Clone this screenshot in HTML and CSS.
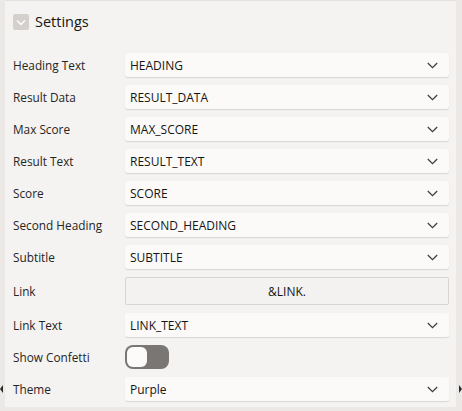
FILE: index.html
```html
<!DOCTYPE html>
<html>
<head>
<meta charset="utf-8">
<link rel="stylesheet" href="styles.css">
</head>
<body>
<div class="panel">
  <div class="header">
    <span class="collapse">
      <svg width="16" height="16" viewBox="0 0 16 16"><path d="M4 6.5 L8 10.5 L12 6.5" fill="none" stroke="#fff" stroke-width="1.4"/></svg>
    </span>
    <span class="title">Settings</span>
  </div>
  <div class="rows">
    <div class="row"><label class="lbl">Heading Text</label><div class="select"><span>HEADING</span><svg class="chev" width="11" height="7" viewBox="0 0 11 7"><path d="M0.8 1 L5.5 5.7 L10.2 1" fill="none" stroke="#3b3a38" stroke-width="1.2"/></svg></div></div>
    <div class="row"><label class="lbl">Result Data</label><div class="select"><span>RESULT_DATA</span><svg class="chev" width="11" height="7" viewBox="0 0 11 7"><path d="M0.8 1 L5.5 5.7 L10.2 1" fill="none" stroke="#3b3a38" stroke-width="1.2"/></svg></div></div>
    <div class="row"><label class="lbl">Max Score</label><div class="select"><span>MAX_SCORE</span><svg class="chev" width="11" height="7" viewBox="0 0 11 7"><path d="M0.8 1 L5.5 5.7 L10.2 1" fill="none" stroke="#3b3a38" stroke-width="1.2"/></svg></div></div>
    <div class="row"><label class="lbl">Result Text</label><div class="select"><span>RESULT_TEXT</span><svg class="chev" width="11" height="7" viewBox="0 0 11 7"><path d="M0.8 1 L5.5 5.7 L10.2 1" fill="none" stroke="#3b3a38" stroke-width="1.2"/></svg></div></div>
    <div class="row"><label class="lbl">Score</label><div class="select"><span>SCORE</span><svg class="chev" width="11" height="7" viewBox="0 0 11 7"><path d="M0.8 1 L5.5 5.7 L10.2 1" fill="none" stroke="#3b3a38" stroke-width="1.2"/></svg></div></div>
    <div class="row"><label class="lbl">Second Heading</label><div class="select"><span>SECOND_HEADING</span><svg class="chev" width="11" height="7" viewBox="0 0 11 7"><path d="M0.8 1 L5.5 5.7 L10.2 1" fill="none" stroke="#3b3a38" stroke-width="1.2"/></svg></div></div>
    <div class="row"><label class="lbl">Subtitle</label><div class="select"><span>SUBTITLE</span><svg class="chev" width="11" height="7" viewBox="0 0 11 7"><path d="M0.8 1 L5.5 5.7 L10.2 1" fill="none" stroke="#3b3a38" stroke-width="1.2"/></svg></div></div>
    <div class="row"><label class="lbl">Link</label><div class="textbox">&amp;LINK.</div></div>
    <div class="row"><label class="lbl">Link Text</label><div class="select"><span>LINK_TEXT</span><svg class="chev" width="11" height="7" viewBox="0 0 11 7"><path d="M0.8 1 L5.5 5.7 L10.2 1" fill="none" stroke="#3b3a38" stroke-width="1.2"/></svg></div></div>
    <div class="row"><label class="lbl">Show Confetti</label><div class="toggle"><span class="knob"></span></div></div>
    <div class="row"><label class="lbl">Theme</label><div class="select"><span>Purple</span><svg class="chev" width="11" height="7" viewBox="0 0 11 7"><path d="M0.8 1 L5.5 5.7 L10.2 1" fill="none" stroke="#3b3a38" stroke-width="1.2"/></svg></div></div>
  </div>
</div>
<span class="handle handle-left"></span>
<span class="handle handle-right"></span>
</body>
</html>
```
FILE: styles.css
```css
html, body {
  margin: 0;
  padding: 0;
}
body {
  width: 462px;
  height: 411px;
  background: #ebe8e5;
  font-family: "Open Sans", "Noto Sans", sans-serif;
  color: #1f1e1c;
  position: relative;
  overflow: hidden;
}
.panel {
  margin-left: 5px;
  width: 451px;
  height: 407px;
  background: #f4f3f1;
  border-top: 1px solid #e4e1de;
  box-sizing: border-box;
  padding: 12px 7px 0 8px;
}
.header {
  display: flex;
  align-items: center;
  height: 17px;
  gap: 6px;
}
.collapse {
  width: 16px;
  height: 16px;
  background: #d4d1cd;
  border-radius: 2px;
  display: flex;
}
.title {
  font-size: 14.5px;
  color: #161513;
}
.rows {
  margin-top: 23px;
  display: flex;
  flex-direction: column;
  gap: 8px;
}
.row {
  display: flex;
  align-items: center;
  min-height: 24px;
}
.lbl {
  width: 112px;
  font-size: 11.8px;
  color: #262523;
}
.select {
  width: 324px;
  height: 24px;
  box-sizing: border-box;
  background: #fbfaf9;
  border-radius: 3px;
  box-shadow: 0 1px 1px rgba(0,0,0,0.12);
  display: flex;
  align-items: center;
  justify-content: space-between;
  padding: 0 11px 0 5px;
  font-size: 12px;
  color: #161513;
}
.chev {
  display: block;
}
.textbox {
  width: 324px;
  height: 28px;
  box-sizing: border-box;
  background: #f3f2f0;
  border: 1px solid #d9d6d2;
  border-radius: 2px;
  display: flex;
  align-items: center;
  justify-content: center;
  font-size: 12px;
  color: #161513;
}
.toggle {
  width: 44px;
  height: 24px;
  background: #7a7673;
  border-radius: 8px;
  box-sizing: border-box;
  padding: 2px;
  display: flex;
}
.knob {
  width: 20px;
  height: 20px;
  background: #fcfbfa;
  border-radius: 6px;
}
.handle {
  position: absolute;
  top: 385px;
  width: 0;
  height: 0;
  border-top: 4px solid transparent;
  border-bottom: 4px solid transparent;
}
.handle-left {
  left: 0;
  border-right: 3px solid #2b2a28;
}
.handle-right {
  right: 0;
  border-left: 3px solid #2b2a28;
}
```
